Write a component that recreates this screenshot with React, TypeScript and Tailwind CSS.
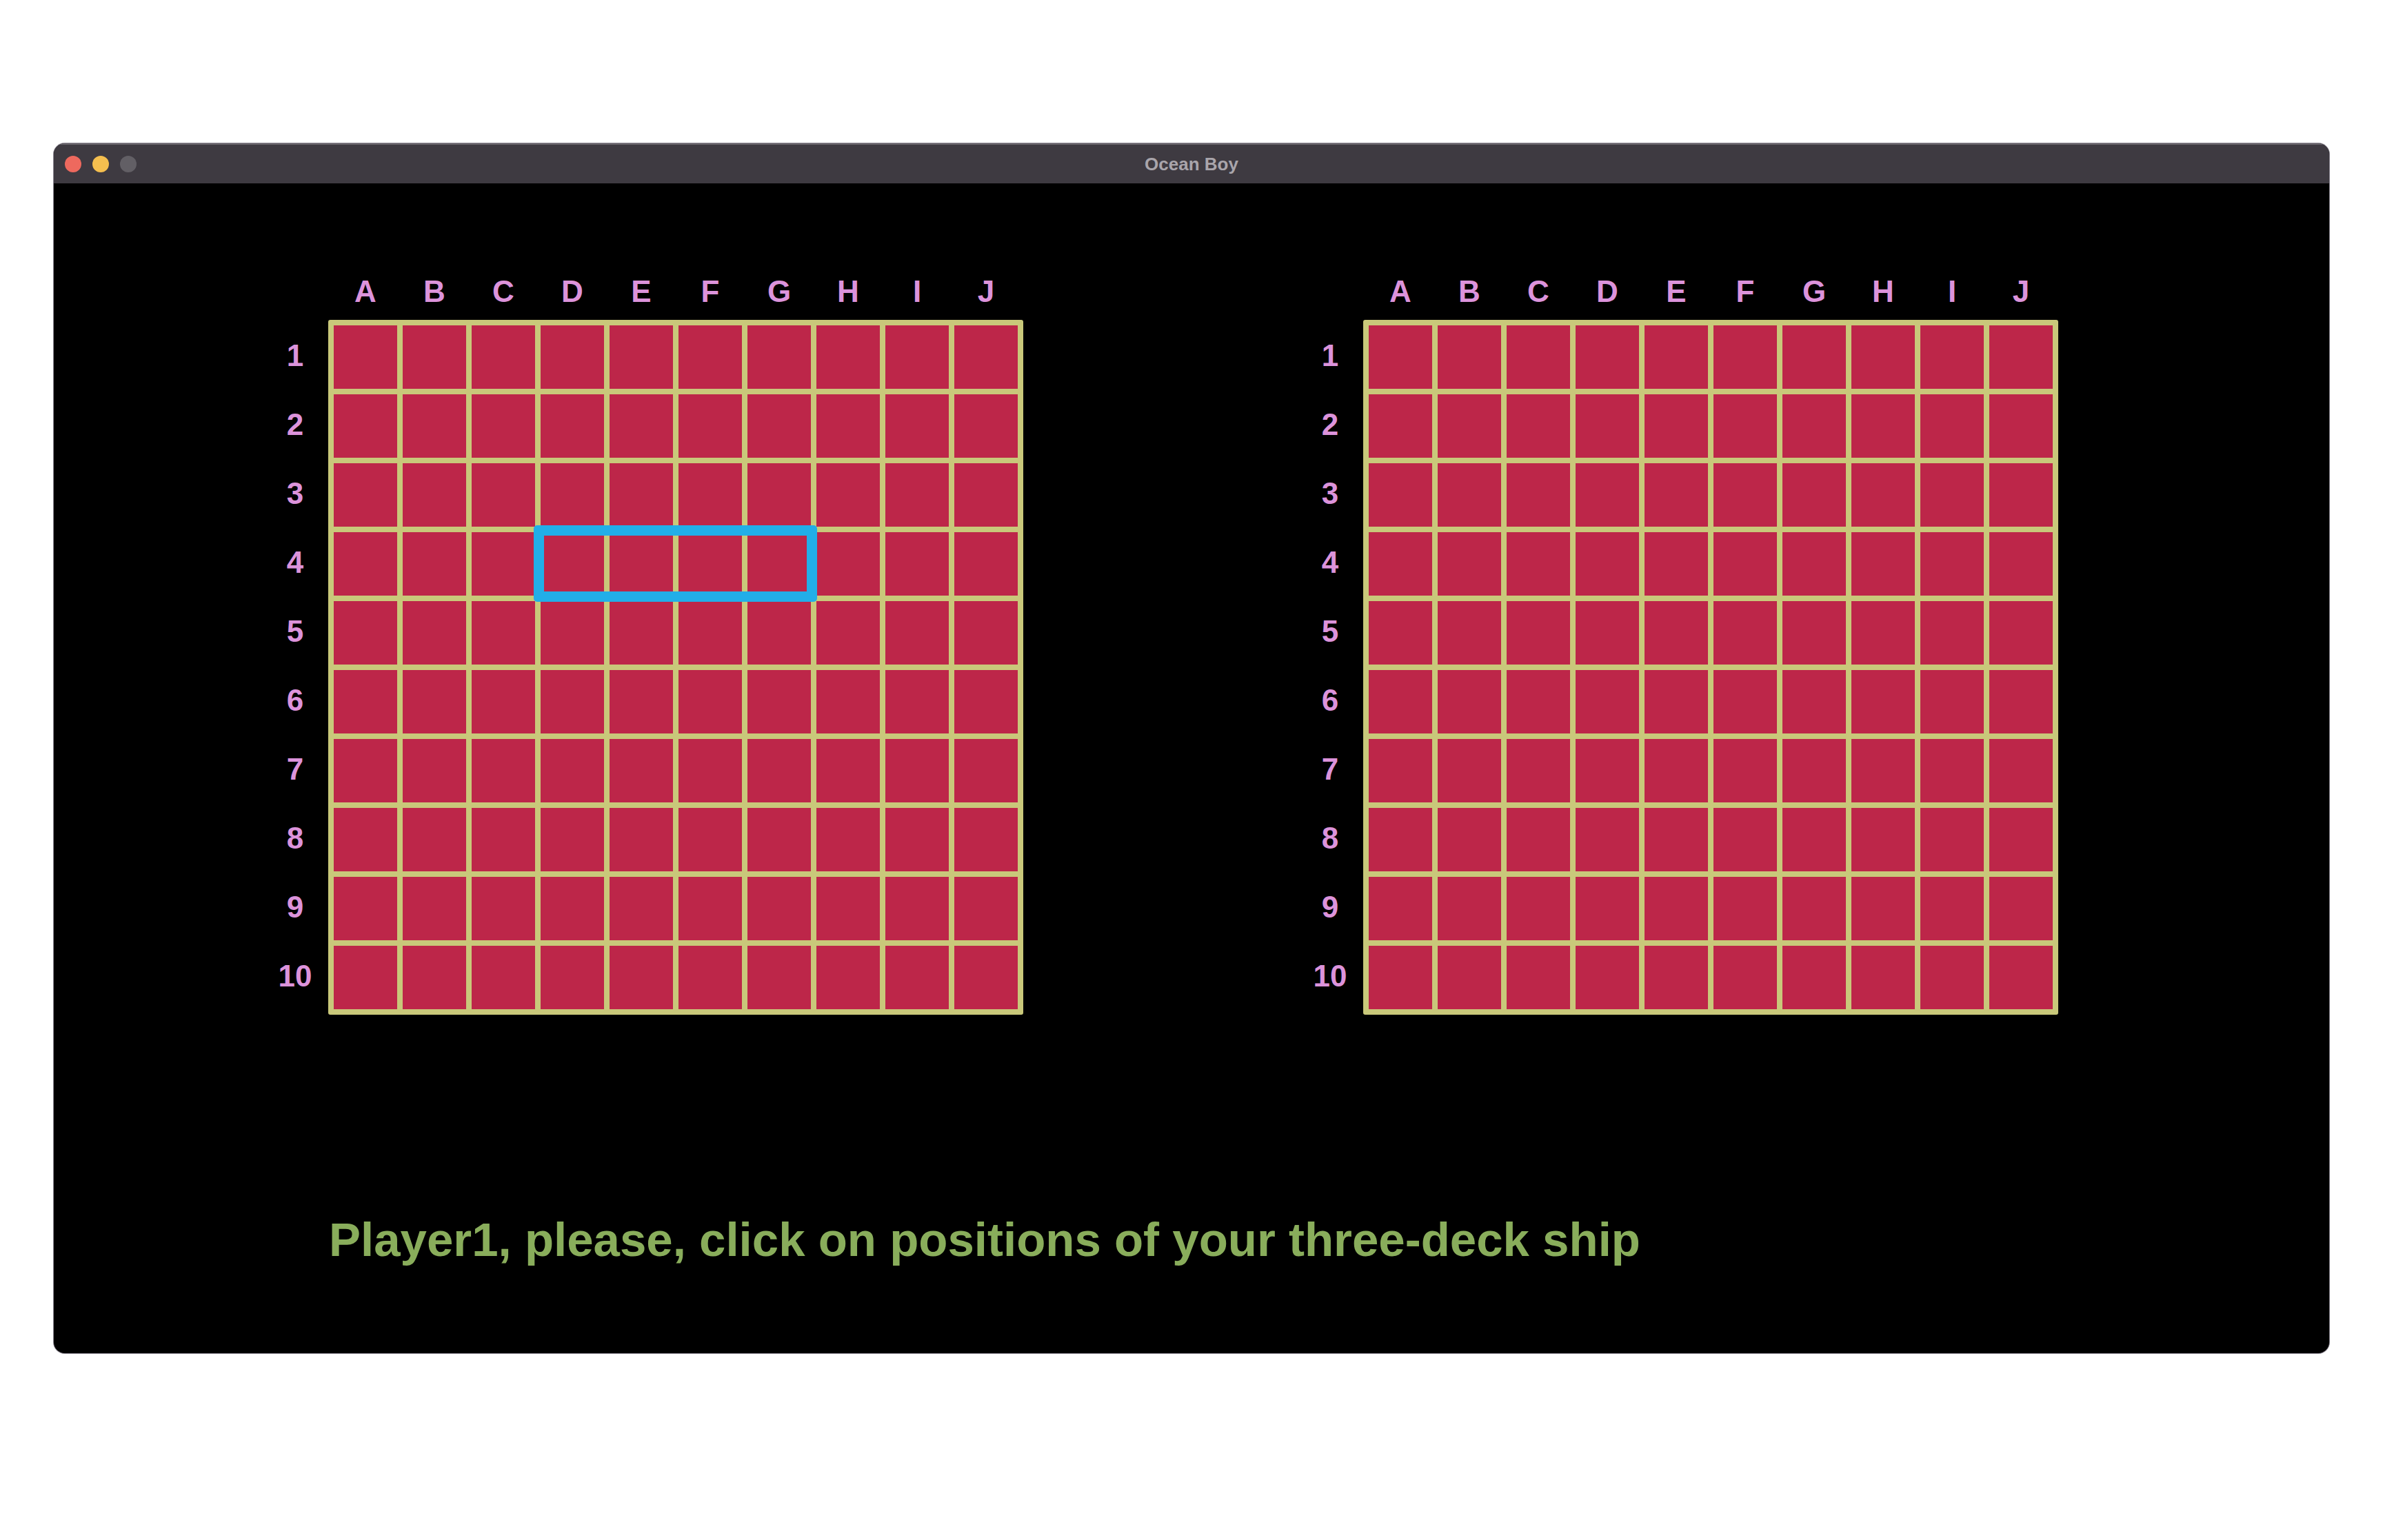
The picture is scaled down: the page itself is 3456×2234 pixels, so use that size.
const COLS = ["A", "B", "C", "D", "E", "F", "G", "H", "I", "J"];
const ROWS = [1, 2, 3, 4, 5, 6, 7, 8, 9, 10];

function Board({ selection }: { selection?: boolean }) {
  return (
    <div className="flex flex-col">
      <div className="mb-[19px] flex h-[44px] gap-[8px] pl-[104px]">
        {COLS.map((c) => (
          <div
            key={c}
            className="w-[92px] text-center text-[44px] leading-[44px] font-bold text-[#dc93db]"
          >
            {c}
          </div>
        ))}
      </div>
      <div className="flex">
        <div className="flex w-[96px] flex-col gap-[8px] pt-[6px]">
          {ROWS.map((r) => (
            <div
              key={r}
              className="flex h-[92px] items-center justify-center text-[44px] leading-none font-bold text-[#dc93db]"
            >
              {r}
            </div>
          ))}
        </div>
        <div className="relative grid grid-cols-[repeat(10,92px)] gap-[8px] rounded-[3px] bg-[#c9c87a] p-[8px]">
          {ROWS.map((r) =>
            COLS.map((c) => <div key={`${c}${r}`} className="h-[92px] w-[92px] bg-[#bd2649]" />)
          )}
          {selection ? (
            <div className="absolute top-[298px] left-[298px] h-[111px] w-[411px] rounded-[5px] border-[15px] border-[#22aee8]" />
          ) : null}
        </div>
      </div>
    </div>
  );
}

export default function App() {
  return (
    <div className="h-[2234px] w-[3456px] bg-white pt-[208px] pl-[78px] font-['Liberation_Sans',Arial,sans-serif]">
      <div className="flex h-[1755px] w-[3300px] flex-col overflow-hidden rounded-[16px] bg-black shadow-[0_0_0_1px_#8a8590]">
        <div className="grid h-[58px] grid-cols-[1fr_auto_1fr] items-center border-t-[2px] border-[#68646b] bg-[#3e3a41]">
          <div className="flex gap-[16px] pl-[16px]">
            <span className="h-[24px] w-[24px] rounded-full bg-[#ee695e]" />
            <span className="h-[24px] w-[24px] rounded-full bg-[#f5bf4f]" />
            <span className="h-[24px] w-[24px] rounded-full bg-[#625f65]" />
          </div>
          <div className="text-[26px] leading-none font-bold text-[#a9a5ab]">Ocean Boy</div>
          <div />
        </div>
        <div className="flex-1 pt-[135px] pl-[302px]">
          <div className="flex gap-[397px]">
            <Board selection />
            <Board />
          </div>
          <p className="mt-[292px] ml-[97px] text-[69px] leading-none font-bold text-[#89ad5b]">
            Player1, please, click on positions of your three-deck ship
          </p>
        </div>
      </div>
    </div>
  );
}
